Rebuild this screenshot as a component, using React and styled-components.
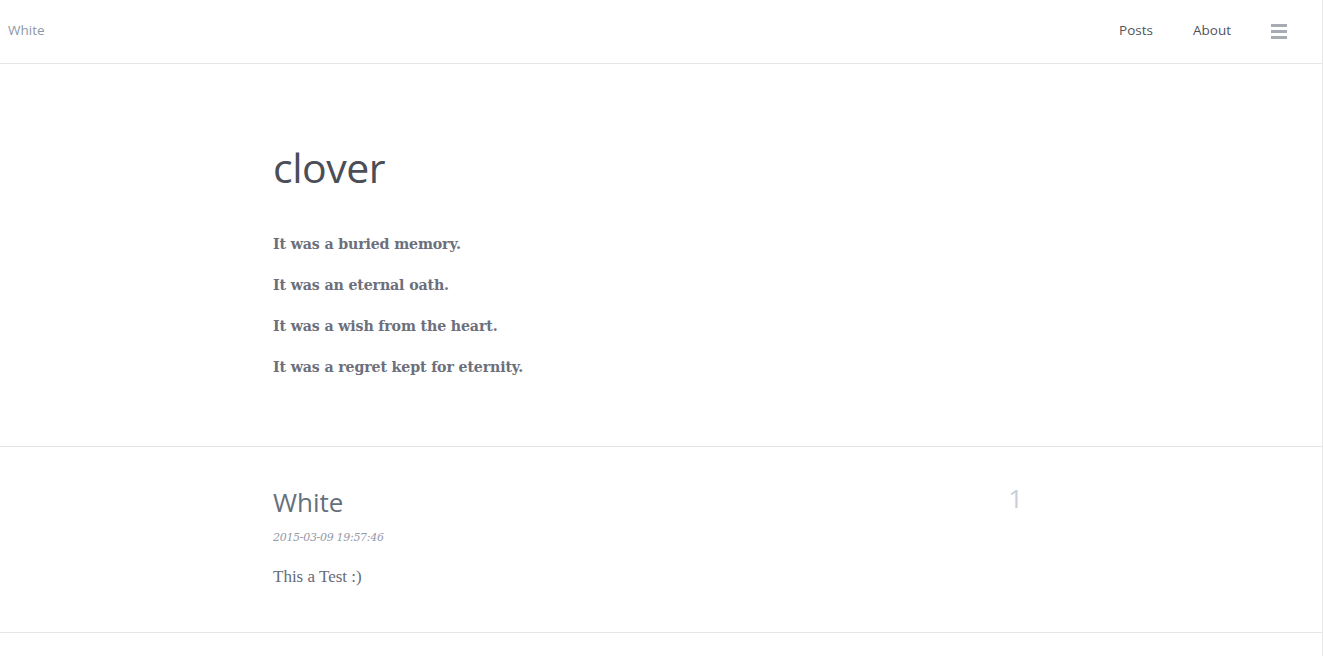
import React from 'react';
import styled, { createGlobalStyle } from 'styled-components';

const GlobalStyle = createGlobalStyle`
  html, body {
    margin: 0;
    padding: 0;
    background: #fff;
  }
  body {
    font-family: Lato, "Open Sans", sans-serif;
  }
`;

const Page = styled.div`
  width: 1322px;
  min-height: 656px;
  border-right: 1px solid #e6e6e6;
  background: #fff;
`;

const NavBar = styled.header`
  height: 63px;
  border-bottom: 1px solid #e5e5e5;
  display: flex;
  align-items: center;
  justify-content: space-between;
  padding: 0 35px 0 8px;
`;

const Brand = styled.a`
  font-family: "Open Sans", sans-serif;
  font-size: 13.5px;
  color: #8d98a6;
  text-decoration: none;
  margin-top: -3px;
`;

const NavLinks = styled.nav`
  display: flex;
  align-items: center;
  gap: 40px;
  margin-top: -3px;
`;

const NavLink = styled.a`
  font-family: "Open Sans", sans-serif;
  font-size: 13.5px;
  color: #4f545c;
  text-decoration: none;
`;

const MenuButton = styled.span`
  display: flex;
  flex-direction: column;
  gap: 3px;
  width: 16px;
  margin-top: 3px;
  span {
    height: 3px;
    background: #a7abb3;
  }
`;

const Section = styled.section`
  border-bottom: 1px solid #e5e5e5;
`;

const Container = styled.div`
  width: 776px;
  margin: 0 auto;
`;

const Hero = styled(Container)`
  padding: 83px 0 48px;
`;

const HeroTitle = styled.h1`
  margin: 0 0 46px;
  font-family: "Open Sans", sans-serif;
  font-weight: 400;
  font-size: 41px;
  line-height: 1;
  color: #4b4d57;
  letter-spacing: -0.5px;
`;

const Quote = styled.p`
  margin: 0 0 21px;
  font-family: "DejaVu Serif", serif;
  font-weight: 700;
  font-size: 14.2px;
  line-height: 20px;
  color: #6c6f7c;
  letter-spacing: -0.15px;
`;

const PostRow = styled(Container)`
  display: flex;
  justify-content: space-between;
  padding: 38px 0 45px;
`;

const PostTitle = styled.h2`
  margin: 0;
  font-family: "Open Sans", sans-serif;
  font-weight: 400;
  font-size: 26px;
  line-height: 34px;
  color: #666f7c;
`;

const PostDate = styled.div`
  margin-top: 12px;
  font-family: "DejaVu Serif", serif;
  font-style: italic;
  font-size: 11px;
  color: #959aa8;
  letter-spacing: -0.3px;
`;

const PostBody = styled.p`
  margin: 23px 0 0;
  font-family: "Liberation Serif", serif;
  font-size: 17px;
  color: #666b76;
`;

const Count = styled.div`
  font-family: "Open Sans", sans-serif;
  font-size: 26px;
  line-height: 34px;
  color: #c9cdd9;
  padding-right: 26px;
  margin-top: -4px;
`;

const quotes = [
  'It was a buried memory.',
  'It was an eternal oath.',
  'It was a wish from the heart.',
  'It was a regret kept for eternity.',
];

const posts = [
  { id: 1, title: 'White', date: '2015-03-09 19:57:46', excerpt: 'This a Test :)', count: 1 },
];

export default function App() {
  return (
    <>
      <GlobalStyle />
      <Page>
        <NavBar>
          <Brand href="#">White</Brand>
          <NavLinks>
            <NavLink href="#">Posts</NavLink>
            <NavLink href="#">About</NavLink>
            <MenuButton>
              <span />
              <span />
              <span />
            </MenuButton>
          </NavLinks>
        </NavBar>
        <Section>
          <Hero>
            <HeroTitle>clover</HeroTitle>
            {quotes.map((q) => (
              <Quote key={q}>{q}</Quote>
            ))}
          </Hero>
        </Section>
        {posts.map((p) => (
          <Section key={p.id}>
            <PostRow>
              <div>
                <PostTitle>{p.title}</PostTitle>
                <PostDate>{p.date}</PostDate>
                <PostBody>{p.excerpt}</PostBody>
              </div>
              <Count>{p.count}</Count>
            </PostRow>
          </Section>
        ))}
      </Page>
    </>
  );
}
